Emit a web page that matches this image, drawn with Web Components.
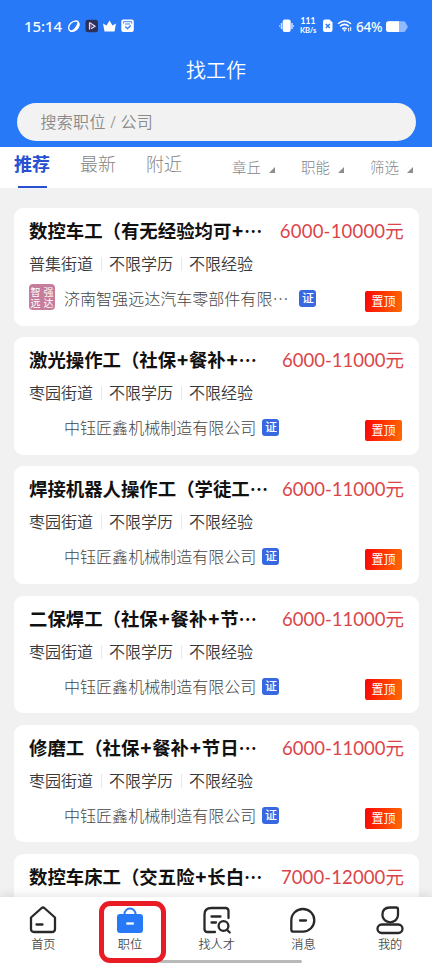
<!DOCTYPE html>
<html lang="zh-CN">
<head>
<meta charset="utf-8">
<title>找工作</title>
<style>
html,body{margin:0;padding:0}
body{width:432px;height:964px;overflow:hidden;background:#f1f1f1;font-family:Lato,"Noto Sans CJK SC",sans-serif}
</style>
</head>
<body>
<job-app></job-app>
<script>
function define(name, html, setup){
  const t=document.createElement('template');
  t.innerHTML=html;
  customElements.define(name,class extends HTMLElement{
    connectedCallback(){
      if(this.shadowRoot)return;
      const r=this.attachShadow({mode:'open'});
      r.appendChild(t.content.cloneNode(true));
      if(setup)setup(r,this);
    }
  });
}

define('status-bar',`<style>
:host{display:flex;height:52px;box-sizing:border-box;padding:15px 24px 0;align-items:flex-start;color:#fff}
.time{width:38px;white-space:nowrap;font:500 15px/22px "Noto Sans",sans-serif;letter-spacing:-.1px}
svg{display:block;flex:none}
.l{margin-left:5px;margin-top:4px}
.sp{flex:1}
.net{width:18px;text-align:center;font:700 8px/8px Lato,sans-serif;margin:2px 5px 0 5px;white-space:nowrap}
.net div:first-child{font-size:8.500px;line-height:9px}
.net div:last-child{font-size:7.500px;letter-spacing:-.1px;line-height:9px}
.pct{font:500 13.500px/22px "Noto Sans",sans-serif;margin:1px 0 0 4px;width:30px;white-space:nowrap;letter-spacing:-.2px}
</style>
<span class="time">15:14</span>
<svg class="l" width="75" height="14" viewBox="0 0 75 14">
<g transform="rotate(-43 7 7)"><ellipse cx="6.800" cy="7" rx="6" ry="4.200" fill="none" stroke="#fff" stroke-width="1.300"/><path d="M.5 8q6 2.500 12-1.500q.5 5-5.500 5.200Q1.500 11.500.5 8z" fill="#fff"/></g>
<rect x="18.500" y=".7" width="12.500" height="12.600" rx="2.500" fill="#2c315c"/><path d="M22.500 3.500v7M22.500 3.500l5.500 3.700-4 2.500" fill="none" stroke="#e8dcf2" stroke-width="1.200"/><path d="M24 5.500v3" stroke="#d07aa8"/>
<path d="M36 4.500l3.500 2L42.500 1.500l3 5 3.500-2-1.500 7.900h-10z" fill="#fff"/>
<rect x="54.300" y=".6" width="12.500" height="12.500" rx="2" fill="#fff"/><path d="M56.500 4.500V2.700h8.200v1.800M58 5h5" fill="none" stroke="#2879f8" stroke-width=".9"/><path d="M58.300 7.500l2.200 2.200 3.200-3.200" fill="none" stroke="#2879f8" stroke-width="1.300"/></svg>
<span class="sp"></span>
<svg style="margin-top:4px" width="15" height="14" viewBox="0 0 15 14"><rect x="3.700" y=".5" width="8" height="12.500" rx="2" fill="#fff"/><path d="M2.500 4v6M13 4v6" stroke="#cfe0ff" stroke-width="1.500"/><path d="M.7 6v2M14.500 6v2" stroke="#a9c8ff"/></svg>
<div class="net"><div>111</div><div>KB/s</div></div>
<svg style="margin-top:4px" width="30" height="14" viewBox="0 0 30 14"><path d="M3 .5h4.500l3 3V11q0 2-2 2H3Q1 13 1 11V2.500Q1 .5 3 .5z" fill="#fff"/><path d="M3.800 5l4 4M7.800 5l-4 4" stroke="#2879f8" stroke-width="1.400"/>
<path d="M16 4.700q6.500-5.500 13 0M18 7.300q4.500-3.800 9 0M20.200 9.800q2.300-1.800 4.600 0" fill="none" stroke="#fff" stroke-width="1.500"/><path d="M20.800 10.500h3.400l-1.700 2.300z" fill="#fff"/><path d="M26.700 9v3.500M28.700 8v4" stroke="#fff"/></svg>
<span class="pct">64%</span>
<svg style="margin-top:6px" width="22" height="12" viewBox="0 0 22 12"><path d="M3 .3h14q3 0 3 2.700l1.500 1.500v2.500L20 8.500q0 2.500-3 2.500H3Q0 11 0 8.500V3Q0 .3 3 .3z" fill="#92bbff"/><path d="M3 .3h10v10.700H3Q0 11 0 8.500V3Q0 .3 3 .3z" fill="#fff"/></svg>`);

define('search-box',`<style>
:host{display:block;box-sizing:border-box;height:38px;margin:0 16px 0 17px;padding-left:23.500px;border-radius:19px;background:#f2f2f2;color:#8a8a8a;font:350 16px/38px "Noto Sans","Noto Sans CJK SC",sans-serif;letter-spacing:.3px}
</style><slot></slot>`);

define('app-header',`<style>
:host{display:block;height:147px;background:#2879f8;color:#fff}
h1{margin:0;height:50.500px;text-align:center;font:350 20px/35px "Noto Sans CJK SC",sans-serif}
</style><status-bar></status-bar><h1>找工作</h1><search-box>搜索职位 / 公司</search-box>`);

define('filter-item',`<style>
:host{display:flex;width:69px;font-size:14.500px;line-height:22px;color:#858585}
i{width:0;height:0;border-left:6px solid transparent;border-bottom:6px solid #8d8d8d;margin:11px 0 0 8px}
</style><span><slot></slot></span><i></i>`);

define('tab-bar',`<style>
:host{display:flex;height:41px;background:#fff;font:300 18px/32px "Noto Sans CJK SC",sans-serif;color:#858585;box-sizing:border-box;padding-left:14px}
.t{flex:none;width:66px;height:41px}
.on{color:#2850d0;font-weight:700}
.on::after{content:"";display:block;width:29px;height:2px;margin:7px 0 0 4px;background:#2850d0}
.f{display:flex;flex:none;margin:9px 0 0 20px}
</style><div class="t on">推荐</div><div class="t">最新</div><div class="t">附近</div>
<div class="f"><filter-item>章丘</filter-item><filter-item>职能</filter-item><filter-item>筛选</filter-item></div>`);

define('job-card',`<style>
:host{display:block;box-sizing:border-box;height:117.500px;padding:10px 15px 0;border-radius:9px;background:#fff;font-family:"Noto Sans CJK SC",sans-serif}
.row{display:flex}
.top{justify-content:space-between;height:29px;line-height:24.500px}
.title{font-size:18.400px;font-weight:700;color:#111;white-space:nowrap}
.title b{padding:0 .8px}
.pay{color:#db4549;font-family:Lato,"Noto Sans CJK SC",sans-serif;font-size:18.500px;white-space:nowrap;line-height:27px}
.tags{height:34px;line-height:32px;font-size:16px;font-weight:350;color:#393939}
.tags span+span{margin-left:8px;padding-left:8px;background:linear-gradient(#e8e8e8,#e8e8e8) 0 10px/1px 14px no-repeat}
.bottom{height:34px;line-height:34px;font-size:16.050px;font-weight:300;color:#444}
.logo{width:26px;height:26px;border-radius:4px;margin:3px 9px 0 0;box-sizing:border-box}
.logo.has{background:#c67d9d;color:#fff;font-size:10px;line-height:11px;font-weight:400;display:grid;grid-template-columns:1fr 1fr;gap:0 3px;padding:2px 2px 0 1.500px;align-content:start}
.cert{width:17px;height:17px;border-radius:3px;background:#3868df;color:#fff;text-align:center;font-size:12px;line-height:16px;font-weight:500;margin:9px 0 0 6px}
.pin{margin:10px 2px 0 auto;width:37px;height:21px;border-radius:2px;background:linear-gradient(100deg,#fa0505,#ff6c00);color:#fff;font-size:12px;line-height:20px;text-align:center;font-weight:400}
</style>
<div class="row top"><span class="title"></span><span class="pay"></span></div>
<div class="row tags"><span class="place"></span><span>不限学历</span><span>不限经验</span></div>
<div class="row bottom"><div class="logo"></div><span class="co"></span><span class="cert">证</span><span class="pin">置顶</span></div>`,(r,h)=>{
  const q=s=>r.querySelector(s);
  q('.title').innerHTML=h.getAttribute('name').replace(/\+/g,'<b>+</b>');
  q('.pay').textContent=h.getAttribute('pay');
  q('.pay').style.letterSpacing=(h.getAttribute('track')||0)+'px';
  if(!h.hasAttribute('company')){q('.tags').remove();q('.bottom').remove();return}
  q('.place').textContent=h.getAttribute('place');
  q('.co').textContent=h.getAttribute('company');
  const logo=h.getAttribute('logo');
  if(logo){q('.logo').classList.add('has');q('.cert').style.marginLeft='11px';for(const c of logo){const s=document.createElement('span');s.textContent=c;q('.logo').appendChild(s)}}
});

define('nav-item',`<style>
:host{display:flex;flex-direction:column;align-items:center;flex:none;width:86.700px;color:#4c4c4c;font:350 12.200px/15px "Noto Sans CJK SC",sans-serif}
::slotted(svg){display:block;width:30px;height:30px;margin:8px 0 2px;fill:none;stroke:#292929;stroke-width:2.300;stroke-linejoin:round;stroke-linecap:round}
</style><slot name="icon"></slot><span><slot></slot></span>`);

define('bottom-nav',`<style>
:host{display:flex;position:absolute;left:0;top:897px;width:432px;height:67px;background:#fff;box-shadow:0 -1px 10px rgba(0,0,0,.12)}
.mark{position:absolute;left:99px;top:4px;width:67px;height:62px;box-sizing:border-box;border:5px solid #e91b24;border-radius:11px}
.home{position:absolute;left:160px;top:63px;width:142px;height:3px;border-radius:2px;background:#b9b9b9}
</style>
<nav-item><svg slot="icon" viewBox="0 0 30 30"><path d="M3 12.500L13.700 3q1.300-1 2.600 0L27 12.500V24q0 3-3 3H6q-3 0-3-3zM8.500 19.500h6"/></svg>首页</nav-item>
<nav-item><svg slot="icon" viewBox="0 0 30 30"><path d="M9.500 9a5.500 5.500 0 0 1 11 0" stroke="#2879f8" stroke-width="2" stroke-linecap="butt"/><rect x="2" y="9" width="26" height="19" rx="3" fill="#2879f8" stroke="none"/><path d="M11.300 18.500h7.500" stroke="#fff" stroke-linecap="butt"/></svg>职位</nav-item>
<nav-item><svg slot="icon" viewBox="0 0 30 30"><path d="M26.500 13V6q0-3-3-3H9.500Q2.500 3 2.500 9.500V24q0 3 3 3H13M9.500 11.500h9M9.500 17.500h4.500"/><circle cx="21.500" cy="21" r="4.900"/><path d="M25 24.800l2.700 2.700"/></svg>找人才</nav-item>
<nav-item><svg slot="icon" viewBox="0 0 30 30"><path d="M15 4a11.300 11.300 0 0 1 0 22.600H5.500q-2.200 0-2.200-2.200V15.500A11.500 11.500 0 0 1 15 4zM12 15.500h6"/></svg>消息</nav-item>
<nav-item><svg slot="icon" viewBox="0 0 30 30"><path d="M15 2.500H21q2 0 2 2V10a7.800 7.300 0 0 1-15.600 0Q7.400 2.500 15 2.500z"/><rect x="2.500" y="19.500" width="25" height="8.500" rx="4.200"/></svg>我的</nav-item>
<div class="home"></div><div class="mark"></div>`);

define('job-app',`<style>
:host{display:block;position:relative;width:432px;height:964px;overflow:hidden;background:#f1f1f1}
.list{display:flex;flex-direction:column;gap:11.700px;padding:20px 13px 0 14px}
</style>
<app-header></app-header><tab-bar></tab-bar>
<div class="list">
<job-card name="数控车工（有无经验均可+⋯" pay="6000-10000元" place="普集街道" company="济南智强远达汽车零部件有限⋯" logo="智强远达" track=".2"></job-card>
<job-card name="激光操作工（社保+餐补+⋯" pay="6000-11000元" place="枣园街道" company="中钰匠鑫机械制造有限公司"></job-card>
<job-card name="焊接机器人操作工（学徒工⋯" pay="6000-11000元" place="枣园街道" company="中钰匠鑫机械制造有限公司"></job-card>
<job-card name="二保焊工（社保+餐补+节⋯" pay="6000-11000元" place="枣园街道" company="中钰匠鑫机械制造有限公司"></job-card>
<job-card name="修磨工（社保+餐补+节日⋯" pay="6000-11000元" place="枣园街道" company="中钰匠鑫机械制造有限公司"></job-card>
<job-card name="数控车床工（交五险+长白⋯" pay="7000-12000元" track=".1"></job-card>
</div>
<bottom-nav></bottom-nav>`);
</script>
</body>
</html>
